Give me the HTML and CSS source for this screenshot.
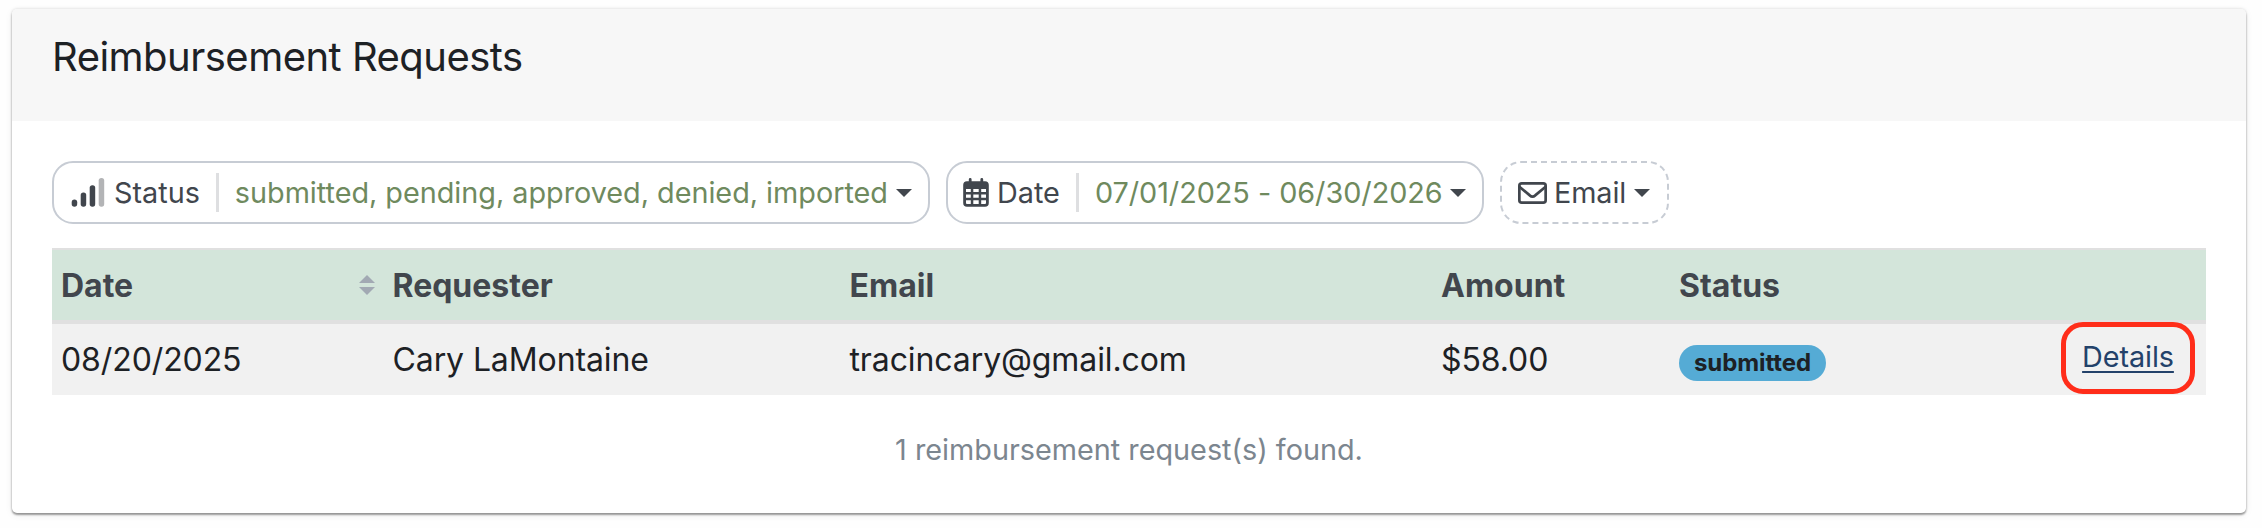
FILE: index.html
```html
<!DOCTYPE html>
<html lang="en">
<head>
<meta charset="utf-8">
<title>Reimbursement Requests</title>
<link rel="stylesheet" href="styles.css">
</head>
<body>
<main class="card">
  <header class="card-header"><h1 class="title">Reimbursement Requests</h1></header>
  <div class="card-body">
    <div class="filters">
      <button class="filter filter-status">
        <svg class="icon-signal" width="34" height="29" viewBox="0 0 34 29"><g fill="#41464d"><rect x="0.700" y="21.500" width="5.500" height="7.200" rx="2.750"/><rect x="9.700" y="14.500" width="5.500" height="14.200" rx="2.600"/><rect x="18.700" y="7.200" width="5.500" height="21.500" rx="2.600"/></g><rect x="27.700" y="0" width="5.500" height="28.700" rx="2.600" fill="#b3b4b6"/></svg>
        <span class="filter-name">Status</span><span class="divider"></span>
        <span class="filter-value value-status">submitted, pending, approved, denied, imported</span><span class="caret"></span>
      </button>
      <button class="filter filter-date">
        <svg class="icon-calendar" width="26" height="29" viewBox="0 0 26 29"><path fill="#41464d" fill-rule="evenodd" d="M7.200 0a1.400 1.400 0 0 1 1.400 1.400V3.200h8.800V1.400a1.400 1.400 0 0 1 2.800 0V3.200H22a3.800 3.800 0 0 1 3.800 3.800V25a3.800 3.800 0 0 1-3.800 3.800H4A3.800 3.800 0 0 1 .2 25V7A3.800 3.800 0 0 1 4 3.200h1.800V1.400A1.400 1.400 0 0 1 7.200 0ZM3 11v3h4.800v-3Zm7.300 0v3h5.400v-3Zm7.900 0v3H23v-3ZM3 16.500v3.300h4.800v-3.300Zm7.300 0v3.300h5.400v-3.300Zm7.900 0v3.300H23v-3.300ZM3 22.300V25a1 1 0 0 0 1 1h3.800v-3.700Zm7.300 0V26h5.400v-3.700Zm7.900 0V26H22a1 1 0 0 0 1-1v-2.700Z"/></svg>
        <span class="filter-name">Date</span><span class="divider"></span>
        <span class="filter-value value-date">07/01/2025 - 06/30/2026</span><span class="caret"></span>
      </button>
      <button class="filter filter-email">
        <svg class="icon-mail" width="29" height="22" viewBox="0 0 29 22"><g fill="none" stroke="#41464d" stroke-width="2.700" stroke-linejoin="round"><rect x="1.350" y="1.350" width="26.300" height="19.300" rx="2.400"/><path d="M1.400 4.800 11.800 13.400a4 4 0 0 0 5.400 0L27.600 4.800"/></g></svg>
        <span class="filter-name">Email</span><span class="caret"></span>
      </button>
    </div>
    <table class="requests">
      <colgroup><col class="col-date"><col class="col-requester"><col class="col-email"><col class="col-amount"><col class="col-status"><col></colgroup>
      <thead><tr>
        <th><div class="sortable"><span>Date</span><svg width="16" height="20" viewBox="0 0 16 20" fill="#a2a9b3"><path d="M8 0l8 8H0zM0 12h16l-8 8z"/></svg></div></th>
        <th>Requester</th><th>Email</th><th>Amount</th><th>Status</th><th></th>
      </tr></thead>
      <tbody><tr>
        <td>08/20/2025</td><td>Cary LaMontaine</td><td>tracincary@gmail.com</td><td>$58.00</td>
        <td><span class="badge">submitted</span></td>
        <td class="actions"><a class="details" href="#">Details</a></td>
      </tr></tbody>
    </table>
    <p class="summary">1 reimbursement request(s) found.</p>
  </div>
</main>
</body>
</html>
```
FILE: styles.css
```css
* { box-sizing: border-box; }
body {
  margin: 0;
  padding: 9px 16px 0 12px;
  height: 528px;
  overflow: hidden;
  background: #fefefe;
  color: #1d2125;
  font-family: Inter, "Liberation Sans", sans-serif;
}
.card {
  height: 504px;
  border-radius: 5px;
  background: #fff;
  box-shadow: 0 2px 2px rgba(0, 0, 0, .36), 0 0 3px rgba(0, 0, 0, .15), 0 2px 8px rgba(0, 0, 0, .06);
}
.card-header {
  height: 112px;
  padding: 25px 40px 0;
  border-radius: 5px 5px 0 0;
  background: #f7f7f7;
}
.title { margin: 0; font-size: 40px; line-height: 46px; font-weight: 400; letter-spacing: -.52px; }
.card-body { padding: 40px 40px 0; }
.filters { display: flex; gap: 16px; }
.filter {
  display: flex;
  align-items: center;
  height: 63px;
  padding: 0;
  border: 2px solid #c7ccd4;
  border-radius: 21px;
  background: #fff;
  color: #41464d;
  font: 400 28.8px/34px Inter, "Liberation Sans", sans-serif;
  white-space: nowrap;
}
.filter svg { flex: none; }
.filter-status { width: 878px; padding-left: 17px; }
.filter-date { width: 538px; padding-left: 15px; }
.filter-email { width: 169px; padding-left: 16px; border-style: dashed; }
.filter-name { margin-left: 8px; }
.filter-status .filter-name { margin-left: 9px; }
.filter-date .filter-value { letter-spacing: -.04px; }
.filter-date .caret { margin-left: 7px; }
.filter-email .filter-name { margin-left: 7px; letter-spacing: -.1px; }
.divider { width: 3px; height: 39px; margin: 0 16px; background: #dedfe1; }
.filter-value { color: #6f8a5e; }
.filter-status .filter-value { letter-spacing: -.02px; }
.caret { margin-left: 8px; border: 8px solid transparent; border-top-color: #41464d; border-bottom: 0; }
.requests {
  width: 100%;
  margin-top: 24px;
  border-spacing: 0;
  table-layout: fixed;
  font-size: 32px;
  line-height: 40px;
}
.col-date { width: 331.5px; }
.col-requester { width: 457px; }
.col-email { width: 591.5px; }
.col-amount { width: 238px; }
.col-status { width: 280px; }
.requests thead { background: #d3e5da; }
.requests th {
  height: 76px;
  padding: 2px 9px 0;
  border-top: 2px solid #e0e0e0;
  border-bottom: 4px solid #e0e0e0;
  color: #41464d;
  font-weight: 700;
  text-align: left;
}
.sortable { display: flex; align-items: center; justify-content: space-between; }
.sortable svg { margin-top: -2px; }
.requests td { height: 71px; padding: 0 9px; background: #f1f1f1; letter-spacing: -.1px; }
.badge {
  display: block;
  width: 147px;
  height: 36px;
  margin-top: 6px;
  border-radius: 18px;
  background: #55abd5;
  font-size: 24px;
  line-height: 35px;
  font-weight: 700;
  text-align: center;
}
.requests .actions { padding: 0 11px 0 0; }
.details {
  display: block;
  width: 134px;
  height: 72px;
  margin: -3px 0 0 auto;
  border: 5px solid #ff2d1a;
  border-radius: 22px;
  color: #23426a;
  font-size: 28.8px;
  line-height: 60px;
  text-align: center;
  text-decoration-thickness: 2px;
  text-underline-offset: 4px;
}
.summary { margin: 36px 0 0; color: #7c868f; font-size: 28.8px; line-height: 38px; text-align: center; }
```
